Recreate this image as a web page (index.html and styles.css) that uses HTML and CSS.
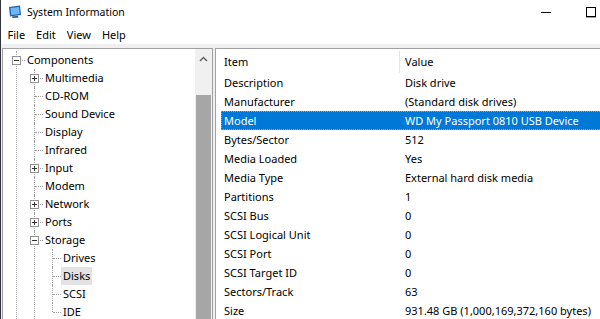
FILE: index.html
```html
<!DOCTYPE html>
<html lang="en">
<head>
    <meta charset="UTF-8">
    <meta name="viewport" content="width=device-width, initial-scale=1.0">
    <title>System Information</title>
    <link rel="stylesheet" href="styles.css">
</head>
<body>
    <div class="window">
        <div class="titlebar">
            <svg class="app-icon" width="14" height="13" viewBox="0 0 14 13">
                <path d="M1 2 L12 0.5 L13 10 L2 11.5 Z" fill="#1f5fbf"/>
                <path d="M2.5 3 L11 2 L11.7 9 L3.2 10 Z" fill="#6fb6ee"/>
                <path d="M4 11.5 L10 10.8 L10.5 12.5 L4.5 13 Z" fill="#2a4f8f"/>
            </svg>
            <span class="title">System Information</span>
            <div class="controls">
                <div class="ctl"><span class="min"></span></div>
                <div class="ctl"><span class="max"></span></div>
                <div class="ctl"></div>
            </div>
        </div>

        <div class="menubar">
            <span class="menu">File</span>
            <span class="menu">Edit</span>
            <span class="menu">View</span>
            <span class="menu">Help</span>
        </div>

        <div class="panes">
            <div class="tree-pane">
                <div class="tree-view">
                    <ul class="tree">
                        <li><div class="row"><span class="exp minus"></span><span class="label">Components</span></div>
                            <ul>
                                <li><div class="row"><span class="exp plus"></span><span class="label">Multimedia</span></div></li>
                                <li class="leaf"><div class="row"><span class="label">CD-ROM</span></div></li>
                                <li class="leaf"><div class="row"><span class="label">Sound Device</span></div></li>
                                <li class="leaf"><div class="row"><span class="label">Display</span></div></li>
                                <li class="leaf"><div class="row"><span class="label">Infrared</span></div></li>
                                <li><div class="row"><span class="exp plus"></span><span class="label">Input</span></div></li>
                                <li class="leaf"><div class="row"><span class="label">Modem</span></div></li>
                                <li><div class="row"><span class="exp plus"></span><span class="label">Network</span></div></li>
                                <li><div class="row"><span class="exp plus"></span><span class="label">Ports</span></div></li>
                                <li><div class="row"><span class="exp minus"></span><span class="label">Storage</span></div>
                                    <ul>
                                        <li class="leaf"><div class="row"><span class="label">Drives</span></div></li>
                                        <li class="leaf"><div class="row"><span class="label selected">Disks</span></div></li>
                                        <li class="leaf"><div class="row"><span class="label">SCSI</span></div></li>
                                        <li class="leaf last"><div class="row"><span class="label">IDE</span></div></li>
                                    </ul>
                                </li>
                            </ul>
                        </li>
                    </ul>
                </div>
                <div class="vscroll">
                    <div class="arrow">
                        <svg width="9" height="6" viewBox="0 0 9 6"><path d="M1 5 L4.5 1.5 L8 5" fill="none" stroke="#606060" stroke-width="1.4"/></svg>
                    </div>
                    <div class="thumb"></div>
                </div>
            </div>

            <div class="splitter"></div>

            <div class="list-pane">
                <div class="list-head">
                    <div class="col-item">Item</div>
                    <div class="col-value">Value</div>
                </div>
                <div class="list-body">
                    <div class="list-row"><div class="col-item">Description</div><div class="col-value">Disk drive</div></div>
                    <div class="list-row"><div class="col-item">Manufacturer</div><div class="col-value">(Standard disk drives)</div></div>
                    <div class="list-row active"><div class="col-item">Model</div><div class="col-value">WD My Passport 0810 USB Device</div></div>
                    <div class="list-row"><div class="col-item">Bytes/Sector</div><div class="col-value">512</div></div>
                    <div class="list-row"><div class="col-item">Media Loaded</div><div class="col-value">Yes</div></div>
                    <div class="list-row"><div class="col-item">Media Type</div><div class="col-value">External hard disk media</div></div>
                    <div class="list-row"><div class="col-item">Partitions</div><div class="col-value">1</div></div>
                    <div class="list-row"><div class="col-item">SCSI Bus</div><div class="col-value">0</div></div>
                    <div class="list-row"><div class="col-item">SCSI Logical Unit</div><div class="col-value">0</div></div>
                    <div class="list-row"><div class="col-item">SCSI Port</div><div class="col-value">0</div></div>
                    <div class="list-row"><div class="col-item">SCSI Target ID</div><div class="col-value">0</div></div>
                    <div class="list-row"><div class="col-item">Sectors/Track</div><div class="col-value">63</div></div>
                    <div class="list-row"><div class="col-item">Size</div><div class="col-value">931.48 GB (1,000,169,372,160 bytes)</div></div>
                </div>
            </div>
        </div>
    </div>
</body>
</html>
```

FILE: styles.css
```css
body {
    margin: 0;
    overflow: hidden;
    background-color: #ffffff;
    font-family: "Noto Sans", "Open Sans", sans-serif;
    font-size: 11px;
    color: #000000;
}
.window {
    width: 660px;
    height: 319px;
    border-left: 1px solid #33333f;
    display: flex;
    flex-direction: column;
    overflow: hidden;
}

/* title bar */
.titlebar {
    height: 24px;
    display: flex;
    align-items: center;
    background-color: #ffffff;
}
.app-icon {
    margin-left: 7px;
    margin-top: -2px;
}
.title {
    margin-left: 5px;
    font-size: 10.5px;
}
.controls {
    margin-left: auto;
    display: flex;
    height: 24px;
}
.ctl {
    width: 46px;
    display: flex;
    align-items: center;
    justify-content: center;
}
.min {
    width: 10px;
    border-top: 1px solid #000000;
}
.max {
    width: 8px;
    height: 8px;
    margin-right: 3px;
    border: 1px solid #000000;
    box-shadow: 0 1px 0 #a0a0a0;
}

/* menu bar */
.menubar {
    height: 20px;
    display: flex;
    align-items: center;
    padding-left: 1px;
}
.menu {
    padding: 0 5.5px;
}

/* panes */
.panes {
    flex: 1;
    display: flex;
    background-color: #f0f0f0;
    padding: 4px 0 0 1px;
    min-height: 0;
}
.tree-pane {
    width: 209px;
    border: 1px solid #a0a0a0;
    border-bottom: none;
    background-color: #ffffff;
    display: flex;
}
.tree-view {
    flex: 1;
    overflow: hidden;
    padding: 2px 0 0 5px;
}
.splitter {
    width: 2px;
}
.vscroll {
    width: 17px;
    background-color: #f0f0f0;
    display: flex;
    flex-direction: column;
}
.arrow {
    height: 17px;
    display: flex;
    align-items: center;
    justify-content: center;
    padding-top: 1px;
}
.thumb {
    margin: 28px 1px 0 1px;
    flex: 1;
    background-color: #a6a6a6;
}

/* tree */
.tree, .tree ul {
    list-style: none;
    margin: 0;
    padding: 0;
}
.tree ul {
    margin-left: 1px;
}
.tree li {
    position: relative;
    padding-left: 17px;
}
.tree li::before {
    content: "";
    position: absolute;
    left: 8px;
    top: 0;
    bottom: 0;
    border-left: 1px dotted #a0a0a0;
}
.tree li.last::before {
    bottom: auto;
    height: 9px;
}
.tree li::after {
    content: "";
    position: absolute;
    left: 9px;
    top: 9px;
    width: 8px;
    border-top: 1px dotted #a0a0a0;
}
.row {
    height: 18px;
    line-height: 18px;
    display: flex;
    white-space: nowrap;
}
.label {
    padding: 0 2px;
    position: relative;
    z-index: 1;
}
.label.selected {
    background-color: #e3e3e3;
}
.exp {
    position: absolute;
    left: 4px;
    top: 5px;
    width: 7px;
    height: 7px;
    border: 1px solid #919191;
    background-color: #ffffff;
    z-index: 2;
}
.exp::before {
    content: "";
    position: absolute;
    left: 1px;
    top: 3px;
    width: 5px;
    border-top: 1px solid #333333;
}
.exp.plus::after {
    content: "";
    position: absolute;
    left: 3px;
    top: 1px;
    height: 5px;
    border-left: 1px solid #333333;
}

/* list view */
.list-pane {
    flex: 1;
    border: 1px solid #a0a0a0;
    border-bottom: none;
    background-color: #ffffff;
    padding-left: 5px;
}
.list-head {
    height: 22px;
    padding-top: 2px;
    line-height: 22px;
    display: flex;
}
.list-head .col-item {
    border-right: 1px solid #e5e5e5;
}
.col-item {
    width: 175px;
    padding-left: 3px;
    flex-shrink: 0;
}
.col-value {
    padding-left: 6px;
    white-space: nowrap;
}
.list-head .col-value {
    padding-left: 5px;
}
.list-row {
    height: 19px;
    line-height: 19px;
    display: flex;
}
.list-row.active {
    background-color: #0078d7;
    color: #ffffff;
    outline: 1px dotted #d9984a;
    outline-offset: -1px;
}
```
